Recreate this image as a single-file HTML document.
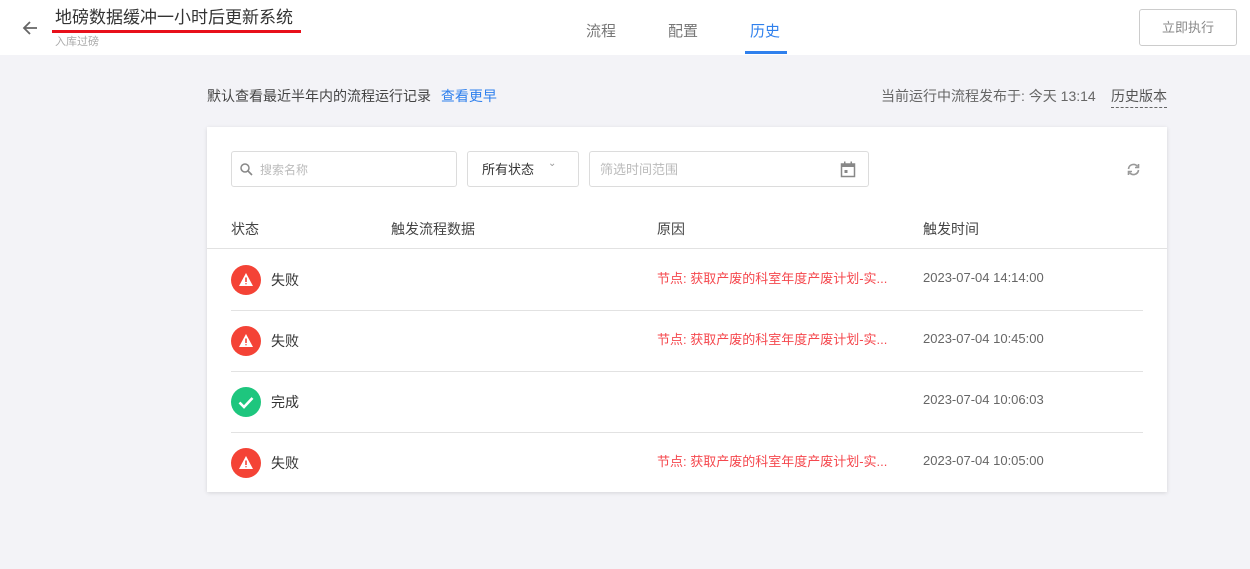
<!DOCTYPE html><html><head><meta charset="utf-8"><style>
*{margin:0;padding:0;box-sizing:border-box}
body{width:1250px;height:569px;background:#f3f3f7;font-family:"Liberation Sans","Noto Sans CJK SC",sans-serif;position:relative;overflow:hidden;color:#333}
.hd{position:absolute;left:0;top:0;width:1250px;height:55px;background:#fff}
.abs{position:absolute;white-space:nowrap}
.card{position:absolute;left:207px;top:127px;width:960px;height:365px;background:#fff;box-shadow:0 1px 4px rgba(0,0,0,.12)}
.inp{position:absolute;border:1px solid #dcdcdc;border-radius:3px;height:36px;top:24px;font-size:13px;color:#bbb}
.ic{position:absolute;left:24px;top:16px;width:30px;height:30px;border-radius:50%}
.st{position:absolute;left:64px;top:21px;font-size:14px;color:#333}
.rs{position:absolute;left:450px;top:19px;font-size:13px;color:#f5484e}
.tm{position:absolute;left:716px;top:21px;font-size:13px;color:#666}
</style></head><body>
<div class="hd">
<svg class="abs" style="left:21px;top:19px" width="18" height="18" viewBox="0 0 18 18"><path d="M16 9H3M9 3L3 9l6 6" stroke="#666" stroke-width="1.8" fill="none"/></svg>
<div class="abs" style="left:55px;top:7px;font-size:17px;color:#333;line-height:22px">地磅数据缓冲一小时后更新系统</div>
<div class="abs" style="left:52px;top:30px;width:249px;height:3px;background:#e8101b"></div>
<div class="abs" style="left:55px;top:33px;font-size:11px;color:#aaa">入库过磅</div>
<div class="abs" style="left:586px;top:20px;font-size:15px;color:#777">流程</div>
<div class="abs" style="left:668px;top:20px;font-size:15px;color:#777">配置</div>
<div class="abs" style="left:750px;top:20px;font-size:15px;color:#2f80ed">历史</div>
<div class="abs" style="left:745px;top:51px;width:42px;height:3px;background:#2f80ed"></div>
<div class="abs" style="left:1139px;top:9px;width:98px;height:37px;border:1px solid #ccc;border-radius:3px;font-size:13px;color:#888;text-align:center;line-height:35px">立即执行</div>
</div>
<div class="abs" style="left:207px;top:86px;font-size:14px;color:#444">默认查看最近半年内的流程运行记录 <span style="color:#2f80ed;margin-left:6px">查看更早</span></div>
<div class="abs" style="left:881px;top:86px;font-size:14px;color:#666">当前运行中流程发布于: 今天 13:14</div>
<div class="abs" style="left:1111px;top:86px;font-size:14px;color:#555;border-bottom:1px dashed #666;padding-bottom:1px">历史版本</div>
<div class="card">
<div class="inp" style="left:24px;width:226px"><svg class="abs" style="left:8px;top:11px" width="13" height="13" viewBox="0 0 13 13"><circle cx="5" cy="5" r="4" stroke="#888" stroke-width="1.5" fill="none"/><path d="M8 8l4 4" stroke="#888" stroke-width="1.6"/></svg><span class="abs" style="left:28px;top:9px;font-size:12px">搜索名称</span></div>
<div class="inp" style="left:260px;width:112px;color:#333"><span class="abs" style="left:14px;top:7px">所有状态</span><span class="abs" style="left:80px;top:6px;color:#999;font-size:10px">⌄</span></div>
<div class="inp" style="left:382px;width:280px"><span class="abs" style="left:10px;top:7px">筛选时间范围</span><svg class="abs" style="left:250px;top:9px" width="16" height="17" viewBox="0 0 16 17"><rect x="1.5" y="3" width="13" height="12.5" stroke="#888" stroke-width="1.5" fill="none"/><rect x="1.5" y="3" width="13" height="3" fill="#888"/><rect x="4" y="0.5" width="1.5" height="3" fill="#888"/><rect x="10.5" y="0.5" width="1.5" height="3" fill="#888"/><rect x="4.5" y="9" width="3" height="3" fill="#888"/></svg></div>
<svg class="abs" style="left:919px;top:35px" width="15" height="15" viewBox="0 0 15 15"><path d="M2.5 7a5 5 0 0 1 9-2.5M12.5 8a5 5 0 0 1-9 2.5" stroke="#999" stroke-width="1.6" fill="none"/><path d="M12.5 2v3.5H9M2.5 13V9.5H6" stroke="#999" stroke-width="1.6" fill="none"/></svg>
<div class="abs" style="left:24px;top:92px;font-size:14px;color:#444">状态</div>
<div class="abs" style="left:184px;top:92px;font-size:14px;color:#444">触发流程数据</div>
<div class="abs" style="left:450px;top:92px;font-size:14px;color:#444">原因</div>
<div class="abs" style="left:716px;top:92px;font-size:14px;color:#444">触发时间</div>
<div class="abs" style="left:0;top:121px;width:960px;height:1px;background:#e2e2e2"></div>
<div style="position:absolute;left:0;top:122px;width:936px">
 <div style="position:absolute;top:0;left:0;width:936px;height:61px"><div class="ic" style="background:#f44336"><svg width="30" height="30"><path d="M15 8l7 13H8z" fill="#fff"/><path d="M15 12.5v4.5M15 18.3v1" stroke="#f44336" stroke-width="1.6"/></svg></div><div class="st">失败</div><div class="rs">节点: 获取产废的科室年度产废计划-实...</div><div class="tm">2023-07-04 14:14:00</div></div>
 <div style="position:absolute;top:61px;left:24px;width:912px;height:1px;background:#e2e2e2"></div>
 <div style="position:absolute;top:61px;left:0;width:936px;height:61px"><div class="ic" style="background:#f44336"><svg width="30" height="30"><path d="M15 8l7 13H8z" fill="#fff"/><path d="M15 12.5v4.5M15 18.3v1" stroke="#f44336" stroke-width="1.6"/></svg></div><div class="st">失败</div><div class="rs">节点: 获取产废的科室年度产废计划-实...</div><div class="tm">2023-07-04 10:45:00</div></div>
 <div style="position:absolute;top:122px;left:24px;width:912px;height:1px;background:#e2e2e2"></div>
 <div style="position:absolute;top:122px;left:0;width:936px;height:61px"><div class="ic" style="background:#1ec67e"><svg width="30" height="30"><path d="M8.5 15.5l4.5 4.5 8.5-9" stroke="#fff" stroke-width="2.6" fill="none"/></svg></div><div class="st">完成</div><div class="tm">2023-07-04 10:06:03</div></div>
 <div style="position:absolute;top:183px;left:24px;width:912px;height:1px;background:#e2e2e2"></div>
 <div style="position:absolute;top:183px;left:0;width:936px;height:61px"><div class="ic" style="background:#f44336"><svg width="30" height="30"><path d="M15 8l7 13H8z" fill="#fff"/><path d="M15 12.5v4.5M15 18.3v1" stroke="#f44336" stroke-width="1.6"/></svg></div><div class="st">失败</div><div class="rs">节点: 获取产废的科室年度产废计划-实...</div><div class="tm">2023-07-04 10:05:00</div></div>
</div>
</div>
</body></html>
